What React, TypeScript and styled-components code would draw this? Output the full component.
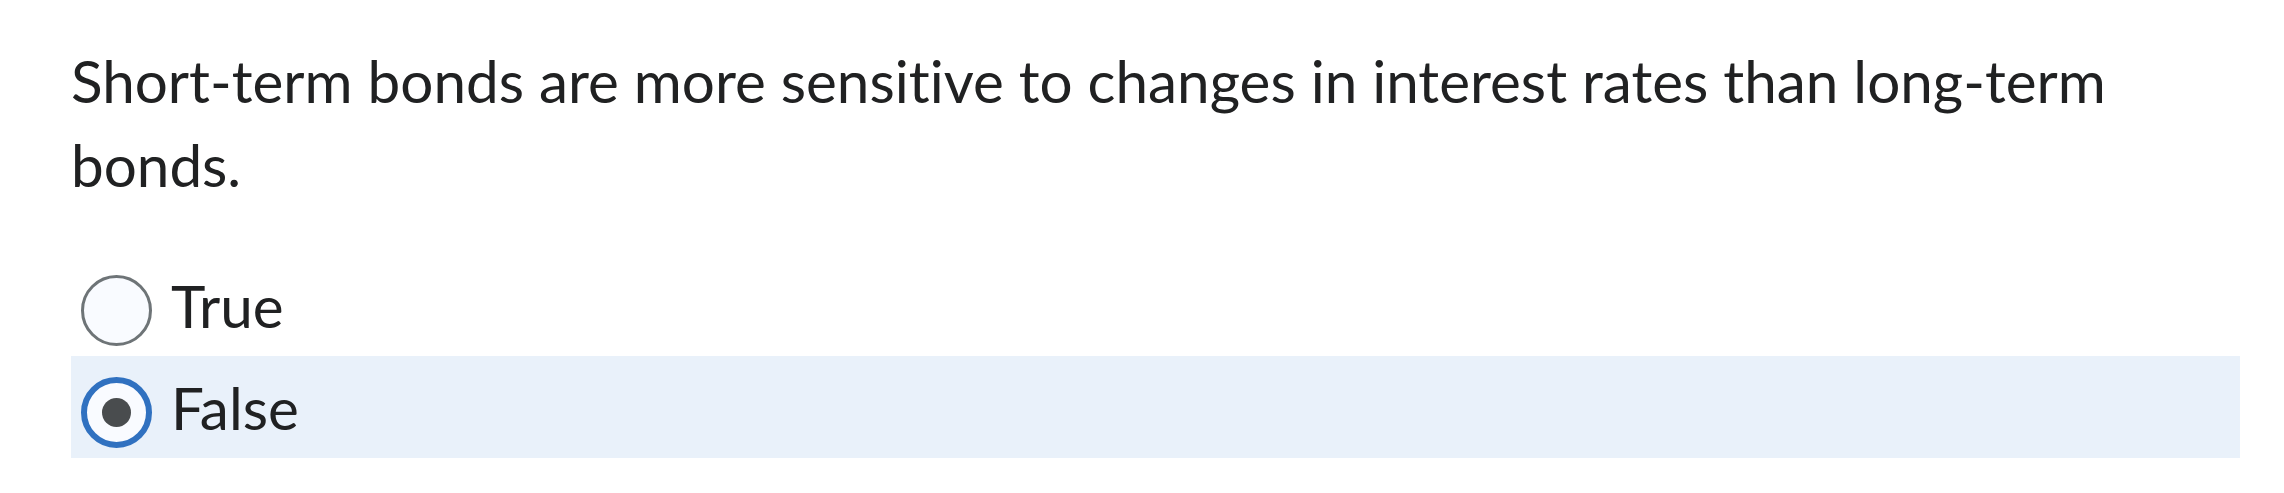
import React from "react";
import styled, { createGlobalStyle } from "styled-components";

const Global = createGlobalStyle`
  html, body { margin: 0; padding: 0; background: #ffffff; }
  body {
    font-family: Lato, "Noto Sans", sans-serif;
    color: #202122;
    font-variant-ligatures: none;
    font-feature-settings: "liga" 0, "clig" 0;
  }
`;

const Page = styled.div`
  padding: 38px 44px 35px 71px;
  display: flex;
  flex-direction: column;
`;

const Question = styled.p`
  margin: 0 0 48px 0;
  font-size: 58.4px;
  line-height: 84px;
  font-weight: 400;
  color: #202122;
`;

const Options = styled.div`
  display: flex;
  flex-direction: column;
`;

const Option = styled.label<{ $selected?: boolean }>`
  display: flex;
  align-items: flex-start;
  gap: 19px;
  padding: 9px 10px;
  background: ${(p) => (p.$selected ? "#e9f1fa" : "transparent")};
  cursor: pointer;
`;

const Radio = styled.span<{ $checked?: boolean }>`
  box-sizing: border-box;
  flex: none;
  width: 71px;
  height: 71px;
  margin-top: 12px;
  border-radius: 50%;
  background: #f9fbff;
  border: ${(p) => (p.$checked ? "6px solid #3071c0" : "3.5px solid #6e7477")};
  display: flex;
  align-items: center;
  justify-content: center;
`;

const Dot = styled.span`
  width: 29px;
  height: 29px;
  border-radius: 50%;
  background: #494c4e;
`;

const Label = styled.span`
  font-size: 58.4px;
  line-height: 84px;
  color: #202122;
`;

const options = [
  { text: "True", checked: false },
  { text: "False", checked: true },
];

export default function App() {
  return (
    <>
      <Global />
      <Page>
        <Question>
          Short-term bonds are more sensitive to changes in interest rates than long-term bonds.
        </Question>
        <Options role="radiogroup">
          {options.map((o) => (
            <Option key={o.text} $selected={o.checked}>
              <Radio $checked={o.checked} role="radio" aria-checked={o.checked}>
                {o.checked && <Dot />}
              </Radio>
              <Label>{o.text}</Label>
            </Option>
          ))}
        </Options>
      </Page>
    </>
  );
}
